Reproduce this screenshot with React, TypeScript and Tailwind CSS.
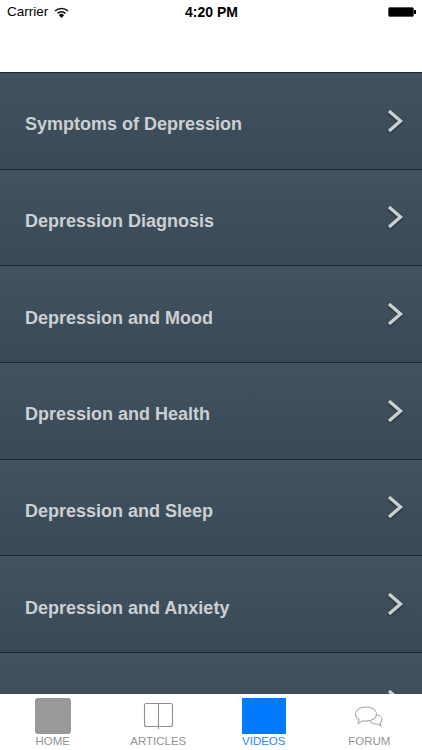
const topics = [
  'Symptoms of Depression',
  'Depression Diagnosis',
  'Depression and Mood',
  'Dpression and Health',
  'Depression and Sleep',
  'Depression and Anxiety',
  '',
]

const Chevron = () => (
  <svg width="18" height="24" viewBox="0 0 18 24" className="shrink-0 drop-shadow-[0_1px_1px_rgba(0,0,0,0.5)]">
    <path d="M3 2 L14.5 12 L3 22" fill="none" stroke="#c9ced1" strokeWidth="3.4" />
  </svg>
)

const TabLabel = ({ text, active }: { text: string; active?: boolean }) => (
  <span className={`text-[11.5px] leading-[14px] ${active ? 'text-[#2f88ea]' : 'text-[#929292]'}`}>{text}</span>
)

export default function App() {
  return (
    <div className="w-[422px] h-[750px] flex flex-col overflow-hidden bg-white font-['Liberation_Sans',Arial,sans-serif]">
      {/* status bar + empty nav */}
      <div className="h-[72px] shrink-0 bg-white">
        <div className="h-[24px] flex items-center justify-between pl-[7px] pr-[6px] text-black">
          <div className="flex items-center gap-[6px] w-[100px]">
            <span className="text-[13.5px]">Carrier</span>
            <svg width="15" height="11" viewBox="0 0 15 11">
              <path d="M1 4 A9.5 9.5 0 0 1 14 4" fill="none" stroke="#111" strokeWidth="1.6" />
              <path d="M3.5 6.4 A6 6 0 0 1 11.5 6.4" fill="none" stroke="#111" strokeWidth="1.6" />
              <path d="M7.5 11 L4.9 8.2 A3.6 3.6 0 0 1 10.1 8.2 Z" fill="#111" />
            </svg>
          </div>
          <span className="text-[14px] font-bold">4:20 PM</span>
          <div className="w-[100px] flex justify-end items-center">
            <div className="w-[26px] h-[10px] bg-black rounded-[2px] border border-[#555]" />
            <div className="w-[1.5px] h-[4px] bg-black ml-[0.5px]" />
          </div>
        </div>
      </div>

      {/* topic list */}
      <div className="flex-1 min-h-0 overflow-hidden">
        {topics.map((t, i) => (
          <div
            key={i}
            className="h-[96.67px] flex items-center justify-between pl-[25px] pr-[18px] border-t-[1.5px] border-[#1f272e] bg-gradient-to-b from-[#425261] to-[#394956]"
          >
            <span className="text-[18px] font-bold text-[#ccd0d3] mt-[8px]">{t}</span>
            <Chevron />
          </div>
        ))}
      </div>

      {/* tab bar */}
      <div className="h-[56px] shrink-0 bg-white grid grid-cols-4 pt-[4px]">
        <div className="flex flex-col items-center">
          <div className="w-[36px] h-[36px] rounded-[3px] bg-[#999999]" />
          <TabLabel text="HOME" />
        </div>
        <div className="flex flex-col items-center">
          <svg width="36" height="36" viewBox="0 0 36 36" fill="none" stroke="#8f8f8f" strokeWidth="1.1">
            <rect x="4.5" y="5.5" width="28" height="23" rx="2" />
            <path d="M18.5 5.5 V31" />
          </svg>
          <TabLabel text="ARTICLES" />
        </div>
        <div className="flex flex-col items-center">
          <div className="w-[44px] h-[36px] bg-[#007aff]" />
          <TabLabel text="VIDEOS" active />
        </div>
        <div className="flex flex-col items-center">
          <svg width="36" height="36" viewBox="0 0 36 36" fill="none" stroke="#a8a8a8" strokeWidth="1.1">
            <path d="M15 9 C8.5 9 4.5 12.3 4.5 16 C4.5 18.4 6 20.3 8.2 21.6 L7 25.5 L12 22.8 C13 23 14 23.1 15 23.1 C21.3 23.1 25.5 20 25.5 16 C25.5 12.3 21.3 9 15 9 Z" />
            <path d="M25.2 17 C28.5 17 31 19 31 21.6 C31 23 30.2 24.2 29 25 L30 27.8 L26 26 C22.7 26.3 19.8 24.9 18.9 22.4" />
          </svg>
          <TabLabel text="FORUM" />
        </div>
      </div>
    </div>
  )
}
